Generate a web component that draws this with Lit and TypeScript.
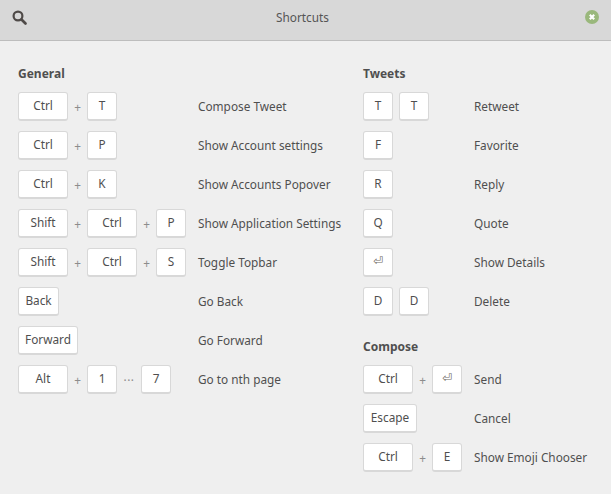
import { LitElement, html, css } from "lit";
import { customElement } from "lit/decorators.js";

type Item = string;
type Row = [Item[], string];

const ENTER = "⏎";

const general: Row[] = [
  [["Ctrl", "+", "T"], "Compose Tweet"],
  [["Ctrl", "+", "P"], "Show Account settings"],
  [["Ctrl", "+", "K"], "Show Accounts Popover"],
  [["Shift", "+", "Ctrl", "+", "P"], "Show Application Settings"],
  [["Shift", "+", "Ctrl", "+", "S"], "Toggle Topbar"],
  [["Back"], "Go Back"],
  [["Forward"], "Go Forward"],
  [["Alt", "+", "1", "…", "7"], "Go to nth page"],
];
const tweets: Row[] = [
  [["T", "T"], "Retweet"],
  [["F"], "Favorite"],
  [["R"], "Reply"],
  [["Q"], "Quote"],
  [[ENTER], "Show Details"],
  [["D", "D"], "Delete"],
];
const compose: Row[] = [
  [["Ctrl", "+", ENTER], "Send"],
  [["Escape"], "Cancel"],
  [["Ctrl", "+", "E"], "Show Emoji Chooser"],
];

const keyClass: Record<string, string> = {
  Ctrl: "wide",
  Shift: "wide",
  Alt: "wide",
  Back: "back",
  Forward: "forward",
  Escape: "escape",
};

@customElement("app-root")
export class AppRoot extends LitElement {
  static styles = css`
    :host {
      display: block;
      width: 611px;
      height: 494px;
      overflow: hidden;
      background: #efefef;
      font-family: "Noto Sans", sans-serif;
      font-size: 11.8px;
      color: #4f4f4f;
    }
    .header {
      height: 40px;
      box-sizing: content-box;
      border-bottom: 1px solid #bdbdbd;
      background: #d8d8d8;
      display: flex;
      align-items: center;
      justify-content: space-between;
      padding: 0 12px;
      position: relative;
    }
    .title {
      position: absolute;
      left: 0;
      right: 6px;
      top: 7px;
      text-align: center;
      line-height: 20px;
      color: #555;
    }
    .search { display: block; margin-top: -6px; }
    .close { display: block; margin-top: -6px; }
    .main {
      display: flex;
      padding: 24px 0 0 18px;
    }
    .left { width: 345px; flex: none; }
    .section-title {
      font-weight: 700;
      font-size: 12px;
      line-height: 18px;
      height: 18px;
      margin-bottom: 9px;
      color: #4f4f4f;
    }
    .rows { display: flex; flex-direction: column; gap: 10px; }
    .row { display: flex; align-items: center; height: 29px; }
    .keys { display: flex; align-items: center; flex: none; }
    .left .keys { width: 180px; }
    .right .keys { width: 111px; }
    .key {
      box-sizing: border-box;
      height: 29px;
      min-width: 30px;
      padding: 0 0 2px;
      display: flex;
      align-items: center;
      justify-content: center;
      background: #fff;
      border: 1px solid #d8d8d8;
      border-bottom-width: 2px;
      border-radius: 3px;
      color: #4f4f4f;
      line-height: 18px;
    }
    .wide { width: 50px; }
    .back { width: 41px; }
    .forward { width: 60px; }
    .escape { width: 54px; }
    .pair { margin-left: 6px; }
    .sep {
      width: 19px;
      text-align: center;
      color: #8c8c8c;
      line-height: 18px;
    }
    .dots { width: 24px; letter-spacing: 0.5px; }
    .label { white-space: nowrap; line-height: 18px; margin-top: -1px; }
    .compose { margin-top: 22px; }
    .enter { font-family: "DejaVu Sans", sans-serif; font-size: 12px; color: #6f6a64; }
  `;

  private renderKey(k: string, i: number, items: string[]) {
    if (k === "+") return html`<span class="sep">+</span>`;
    if (k === "…") return html`<span class="sep dots">···</span>`;
    const pair = i > 0 && items[i - 1] !== "+" && items[i - 1] !== "…";
    return html`<span class="key ${keyClass[k] ?? ""} ${pair ? "pair" : ""}">${k === ENTER
      ? html`<span class="enter">${ENTER}</span>`
      : k}</span>`;
  }

  private renderRows(rows: Row[]) {
    return html`<div class="rows">
      ${rows.map(
        ([items, label]) => html`<div class="row">
          <div class="keys">${items.map((k, i) => this.renderKey(k, i, items))}</div>
          <span class="label">${label}</span>
        </div>`
      )}
    </div>`;
  }

  render() {
    return html`
      <div class="header">
        <svg class="search" width="15" height="15" viewBox="0 0 15 15" fill="none" stroke="#4f4a48">
          <circle cx="6" cy="6" r="4.4" stroke-width="2.2"/>
          <path d="M9.5 9.5 13.5 13.5" stroke-width="2.6" stroke-linecap="round"/>
        </svg>
        <span class="title">Shortcuts</span>
        <svg class="close" width="14" height="14" viewBox="0 0 14 14">
          <circle cx="7" cy="7" r="7" fill="#9ab87c"/>
          <path d="M4.8 4.8 9.2 9.2M9.2 4.8 4.8 9.2" stroke="#fff" stroke-width="2.2"/>
        </svg>
      </div>
      <div class="main">
        <div class="left">
          <div class="section-title">General</div>
          ${this.renderRows(general)}
        </div>
        <div class="right">
          <div class="section-title">Tweets</div>
          ${this.renderRows(tweets)}
          <div class="section-title compose">Compose</div>
          ${this.renderRows(compose)}
        </div>
      </div>
    `;
  }
}
